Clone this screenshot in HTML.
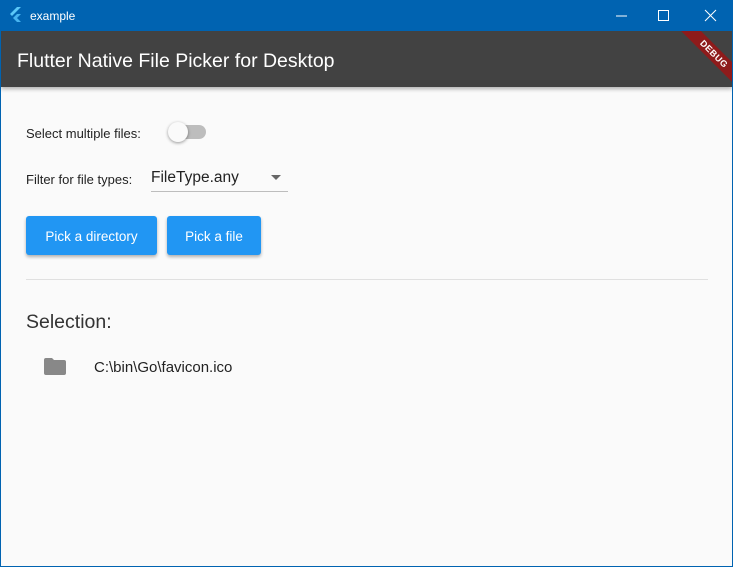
<!DOCTYPE html>
<html><head><meta charset="utf-8"><style>
*{margin:0;padding:0;box-sizing:border-box}
body{width:733px;height:567px;background:#0063b1;font-family:"Liberation Sans",sans-serif;position:relative;overflow:hidden}
.tb{position:absolute;left:0;top:0;width:733px;height:31px;background:#0063b1;color:#fff}
.main{position:absolute;left:1px;top:31px;width:731px;height:535px;background:#fafafa;overflow:hidden}
.appbar{position:absolute;left:0;top:0;width:731px;height:56px;background:#424242;box-shadow:0 2px 4px rgba(0,0,0,.3);overflow:hidden}
.appbar .t{position:absolute;left:16px;top:19px;color:#fff;font-size:19.5px}
.ribbon{position:absolute;right:-42px;top:16px;width:120px;height:14px;background:#8e1b1b;transform:rotate(45deg);color:#fff;font-size:9px;font-weight:bold;text-align:center;line-height:14px;letter-spacing:.5px}
.lbl{position:absolute;font-size:13px;color:#222}
.btn{position:absolute;top:185px;height:39px;background:#2196f3;color:#fff;font-size:13.5px;border-radius:3px;box-shadow:0 2px 3px rgba(0,0,0,.3);text-align:center;line-height:41px}
</style></head><body>
<div class="tb">
<svg style="position:absolute;left:9px;top:7px" width="14" height="16" viewBox="0 0 14 16"><path d="M8 0L1 7l2 2 9-9z" fill="#5bc8f8"/><path d="M8 7L4 11l4 4h4L8 11l4-4z" fill="#47b4f0"/></svg>
<div style="position:absolute;left:30px;top:9px;font-size:12px">example</div>
<svg style="position:absolute;left:610px;top:9px" width="120" height="14"><line x1="6" y1="7" x2="17" y2="7" stroke="#fff"/><rect x="48.5" y="1.5" width="10" height="10" fill="none" stroke="#fff"/><path d="M95 1l11 11M106 1L95 12" stroke="#fff"/></svg>
</div>
<div class="main">
<div class="appbar"><div class="t">Flutter Native File Picker for Desktop</div><div class="ribbon">DEBUG</div></div>
<div class="lbl" style="left:25px;top:95px">Select multiple files:</div>
<div style="position:absolute;left:171px;top:94px;width:34px;height:14px;border-radius:7px;background:#bdbdbd"></div>
<div style="position:absolute;left:167px;top:91px;width:20px;height:20px;border-radius:50%;background:#fafafa;box-shadow:0 1px 3px rgba(0,0,0,.4)"></div>
<div class="lbl" style="left:25px;top:141px">Filter for file types:</div>
<div style="position:absolute;left:150px;top:138px;font-size:15.5px;color:#222">FileType.any</div>
<div style="position:absolute;left:270px;top:144px;width:0;height:0;border-left:5px solid transparent;border-right:5px solid transparent;border-top:5px solid #666"></div>
<div style="position:absolute;left:150px;top:160px;width:137px;height:1px;background:#bdbdbd"></div>
<div class="btn" style="left:25px;width:131px">Pick a directory</div>
<div class="btn" style="left:166px;width:94px">Pick a file</div>
<div style="position:absolute;left:25px;top:248px;width:682px;height:1px;background:#e0e0e0"></div>
<div style="position:absolute;left:25px;top:280px;font-size:19.5px;color:#333">Selection:</div>
<svg style="position:absolute;left:43px;top:327px" width="22" height="17" viewBox="0 0 22 17"><path d="M2 0h6l2 2h10a2 2 0 0 1 2 2v11a2 2 0 0 1-2 2H2a2 2 0 0 1-2-2V2a2 2 0 0 1 2-2z" fill="#888"/></svg>
<div style="position:absolute;left:93px;top:328px;font-size:15px;color:#222">C:\bin\Go\favicon.ico</div>
</div>
</body></html>
